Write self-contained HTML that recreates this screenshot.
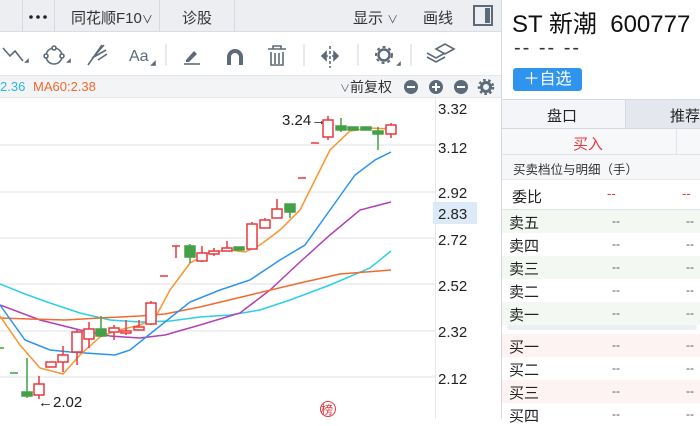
<!DOCTYPE html>
<html><head><meta charset="utf-8"><style>
*{margin:0;padding:0;box-sizing:border-box}
body{width:700px;height:419px;overflow:hidden;background:#fff;font-family:"Liberation Sans","Noto Sans CJK SC",sans-serif;position:relative;color:#222}
.a{position:absolute}
.top{left:0;top:0;width:502px;height:32px;background:#eceef2;border-bottom:1px solid #d9dde3}
.sep{position:absolute;top:0;width:1px;height:32px;background:#d6dae0}
.t{position:absolute;font-size:15px;top:7px;color:#333}
.tool{left:0;top:32px;width:502px;height:44px;background:#fff;border-bottom:1px solid #e3e6ea}
.ma{left:0;top:76px;width:502px;height:22px;background:#f3f4f6;border-bottom:1px solid #e6e8eb;font-size:13px}
.rp{left:501px;top:0;width:199px;height:419px;border-left:1px solid #d6dae0}
.row{position:absolute;left:502px;width:198px;height:23px;font-size:15px}
.row span{position:absolute;top:2px}
.d{color:#555;font-size:12px}
</style></head><body>
<div class="a top">
 <div class="sep" style="left:22px"></div><div class="sep" style="left:54px"></div><div class="sep" style="left:159px"></div><div class="sep" style="left:234px"></div>
 <svg class="a" style="left:28px;top:14px" width="20" height="6"><g fill="#222"><circle cx="3" cy="3" r="1.8"/><circle cx="10" cy="3" r="1.8"/><circle cx="17" cy="3" r="1.8"/></g></svg>
 <div class="t" style="left:71px">同花顺F10<span style="font-size:11px">∨</span></div>
 <div class="t" style="left:182px">诊股</div>
 <div class="t" style="left:353px">显示 <span style="font-size:11px;color:#556">∨</span></div>
 <div class="t" style="left:423px">画线</div>
 <div class="a" style="left:473px;top:5px;width:20px;height:21px;border:2px solid #5d6a7a"><div class="a" style="right:1px;top:1px;width:5px;height:15px;background:#5d6a7a"></div></div>
</div>
<div class="a tool">
 <svg width="502" height="44" style="position:absolute;left:0;top:0" fill="none" stroke="#5d6a7a" stroke-width="1.6">
  <path d="M3 16 L10 24 L15 19 L23 29"/><path d="M26 30 l2-2 v2z" fill="#5d6a7a"/>
  <circle cx="54" cy="24" r="8"/><circle cx="54" cy="16" r="2" fill="#fff"/><circle cx="46" cy="24" r="2" fill="#fff"/><circle cx="62" cy="24" r="2" fill="#fff"/><path d="M68 30 l2-2 v2z" fill="#5d6a7a"/>
  <path d="M88 33 L102 13 M92 26 L106 18 M96 22 L104 13 M98 28 L107 22"/>
  <text x="129" y="29" font-size="16" fill="#5d6a7a" stroke="none" font-family="Liberation Sans">Aa</text><path d="M152 33 l3-3 v3z" fill="#5d6a7a"/>
  <path d="M166 12 v22 M304 12 v22 M358 12 v22 M411 12 v22" stroke="#e3e6ea"/>
  <path d="M186 28 l8-9 l3 3 l-8 8 h-3z" fill="#5d6a7a" stroke="none"/><path d="M184 32 h16"/>
  <path d="M229 33 v-8 a6 6 0 0 1 12 0 v8" stroke-width="4"/>
  <path d="M268 17 h18 M273 17 v-3 h8 v3 M271 20 v13 h12 v-13 M275 21 v11 M279 21 v11"/>
  <path d="M330 14 v22" stroke-dasharray="3 2"/><path d="M322 24 l4-4 v8z M338 24 l-4-4 v8z" fill="#5d6a7a"/><path d="M326 24 h2 M332 24 h2"/>
  <circle cx="384" cy="23" r="5.5" stroke-width="2.5"/><circle cx="384" cy="23" r="8" stroke-width="2" stroke-dasharray="3 3"/><path d="M398 33 l2-2 v2z" fill="#5d6a7a"/>
  <path d="M436 17 l9-5 l9 5 l-9 5z M427 21 l9 5 l9-5 M427 25 l9 5 l9-5"/>
 </svg>
</div>
<div class="a ma"><span class="a" style="left:0;top:3px;color:#2bb7d9">2.36</span><span class="a" style="left:33px;top:3px;color:#f26a2f">MA60:2.38</span>
 <span class="a" style="left:340px;top:1px;color:#333;font-size:14px"><span style="font-size:10px;color:#556">∨</span>前复权</span>
 <svg class="a" style="left:402px;top:3px" width="96" height="16"><g fill="#5d6a7a"><circle cx="9" cy="8" r="7"/><circle cx="34" cy="8" r="7"/><circle cx="59" cy="8" r="7"/></g><g stroke="#fff" stroke-width="2"><path d="M5 8h8M30 8h8M34 4v8M55 8h8"/></g><circle cx="84" cy="8" r="4.5" fill="none" stroke="#5d6a7a" stroke-width="3"/><circle cx="84" cy="8" r="7" fill="none" stroke="#5d6a7a" stroke-width="2.5" stroke-dasharray="2.5 2.5"/></svg>
</div>
<svg class="a" style="left:0;top:98px" width="501" height="321">
<g stroke="#ececee" stroke-width="1.5"><path d="M0 47h435M0 94h435M0 140h435M0 186h435M0 233h435M0 279h435"/></g>
<path d="M435.5 0v321" stroke="#e6e8eb"/>
<rect x="433" y="104" width="44" height="22" fill="#dceaf8"/>
<g font-size="15" fill="#222" font-family="Liberation Sans"><text x="438" y="16">3.32</text><text x="438" y="55">3.12</text><text x="438" y="100">2.92</text><text x="438" y="121">2.83</text><text x="438" y="147">2.72</text><text x="438" y="193">2.52</text><text x="438" y="239">2.32</text><text x="438" y="286">2.12</text>
<text x="282" y="27">3.24→</text><text x="38" y="309">←2.02</text></g>
<g fill="none" stroke-width="1.5" transform="translate(0,-98)">
<polyline stroke="#2bd0e6" points="0,284 25,294 50,303 80,313 110,320 140,322 170,321 200,317 230,315 260,310 290,300 330,285 370,268 391,251"/>
<polyline stroke="#b43fb4" points="0,305 40,320 80,330 110,336 140,338 165,335 200,325 240,313 270,290 300,262 330,235 360,210 391,202"/>
<polyline stroke="#f26a2f" points="0,318 30,319 65,320 100,318 140,316 165,314 200,307 250,295 300,283 340,274 391,270"/>
<polyline stroke="#2b94f0" points="0,305 25,340 50,350 70,352 100,354 115,355 130,350 155,330 190,302 220,290 250,280 280,260 305,245 330,210 355,175 375,160 391,152"/>
<polyline stroke="#f99531" points="0,316 20,345 40,368 63,374 80,355 100,337 115,331 140,325 155,318 170,290 190,263 210,252 230,250 245,252 260,245 280,230 300,210 315,180 330,150 350,131 370,128 391,129"/>
<g stroke="#e8383f" stroke-width="1.5" fill="#fff">
<path d="M39 376v23M63 346v26M77 330v35M89 322v26M114 325v15M126 320v15M139 320v10M151 301v24M176 246v12M202 246v16M214 248v8M227 241v10M252 222v27M265 218v10M277 199v19M328 116v24M391 123v15"/>
<rect x="34" y="384" width="10" height="11"/><rect x="46" y="362" width="10" height="5"/><rect x="58" y="355" width="10" height="7"/><rect x="72" y="332" width="10" height="20"/><rect x="84" y="329" width="10" height="10"/><rect x="109" y="328" width="10" height="4"/><rect x="121" y="331" width="10" height="2"/><rect x="134" y="327" width="10" height="3"/><rect x="146" y="303" width="10" height="21"/><rect x="197" y="253" width="10" height="8"/><rect x="209" y="251" width="10" height="3"/><rect x="222" y="248" width="10" height="3"/><rect x="247" y="224" width="10" height="25"/><rect x="260" y="220" width="10" height="8"/><rect x="272" y="209" width="10" height="9"/><rect x="323" y="120" width="10" height="17"/><rect x="386" y="125" width="10" height="9"/>
<path d="M160 276h8M172 246h8M298 178h8M311 143h8" />
</g>
<g stroke="#44a046" stroke-width="1.5" fill="#44a046">
<path d="M-2 348h6M10 373h8M27 358v40M101 316v20M190 244v19M290 204v14M341 118v14M378 127v23"/>
<rect x="22" y="392" width="10" height="4"/><rect x="96" y="329" width="10" height="7"/><rect x="185" y="246" width="10" height="11"/><rect x="234" y="247" width="10" height="3"/><rect x="285" y="204" width="10" height="8"/><rect x="336" y="126" width="10" height="4"/><rect x="348" y="127" width="10" height="3"/><rect x="361" y="127" width="10" height="3"/><rect x="373" y="131" width="10" height="3"/>
</g></g>
<circle cx="328" cy="311" r="7.5" fill="none" stroke="#e8383f"/><text x="321" y="316" font-size="12" fill="#e8383f" font-family="Noto Sans CJK SC">榜</text>
</svg>
<div class="a rp">
 <div class="a" style="left:10px;top:4px;font-size:24px;color:#111">ST 新潮&nbsp;&nbsp;600777</div>
 <div class="a" style="left:12px;top:37px;font-size:20px;color:#333;letter-spacing:2px">-- -- --</div>
 <div class="a" style="left:11px;top:68px;width:69px;height:23px;background:#2e94ee;border-radius:3px;color:#fff;font-size:16px;text-align:center;line-height:23px">＋自选</div>
 <div class="a" style="left:0;top:99px;width:199px;height:30px;border-top:1px solid #d6dae0;border-bottom:1px solid #d6dae0;background:#f3f5f8">
  <div class="a" style="left:123px;top:0;width:76px;height:28px;background:#e4e8ee;border-left:1px solid #d6dae0"></div>
  <span class="a" style="left:45px;top:5px;font-size:15px">盘口</span><span class="a" style="left:168px;top:5px;font-size:15px">推荐</span>
 </div>
 <div class="a" style="left:0;top:129px;width:199px;height:26px;background:#f7f8fa;border-bottom:1px solid #e0e3e7"><div class="a" style="left:174px;top:0;width:1px;height:26px;background:#e0e3e7"></div><span class="a" style="left:71px;top:4px;font-size:15px;color:#e8383f">买入</span></div>
 <div class="a" style="left:0;top:155px;width:199px;height:25px;background:#f6f7f9;border-bottom:1px solid #e6e8eb"><span class="a" style="left:11px;top:4px;font-size:12.5px;color:#333">买卖档位与明细（手）</span></div>
 <div class="a" style="left:10px;top:186px;font-size:15px">委比</div>
 <div class="a" style="left:105px;top:186px;font-size:13px;color:#e8383f">--</div><div class="a" style="left:180px;top:186px;font-size:13px;color:#e8383f">--</div>
 <div class="a" style="left:0;top:209px;width:199px;height:1px;background:#e0e3e7"></div>
 <div class="a" style="left:5px;top:325px;width:190px;height:5px;border-radius:3px;background:#eceff3"></div>
</div>
<div class="row" style="top:210px;background:#f3f8f3"><span style="left:7px">卖五</span><span class="d" style="left:110px;top:4px">--</span><span class="d" style="left:184px;top:4px">--</span></div>
<div class="row" style="top:233px"><span style="left:7px">卖四</span><span class="d" style="left:110px;top:4px">--</span><span class="d" style="left:184px;top:4px">--</span></div>
<div class="row" style="top:256px;background:#f3f8f3"><span style="left:7px">卖三</span><span class="d" style="left:110px;top:4px">--</span><span class="d" style="left:184px;top:4px">--</span></div>
<div class="row" style="top:279px"><span style="left:7px">卖二</span><span class="d" style="left:110px;top:4px">--</span><span class="d" style="left:184px;top:4px">--</span></div>
<div class="row" style="top:302px;background:#f3f8f3"><span style="left:7px">卖一</span><span class="d" style="left:110px;top:4px">--</span><span class="d" style="left:184px;top:4px">--</span></div>
<div class="row" style="top:334px;background:#fdf3f2"><span style="left:7px">买一</span><span class="d" style="left:110px;top:4px">--</span><span class="d" style="left:184px;top:4px">--</span></div>
<div class="row" style="top:357px"><span style="left:7px">买二</span><span class="d" style="left:110px;top:4px">--</span><span class="d" style="left:184px;top:4px">--</span></div>
<div class="row" style="top:380px;background:#fdf3f2"><span style="left:7px">买三</span><span class="d" style="left:110px;top:4px">--</span><span class="d" style="left:184px;top:4px">--</span></div>
<div class="row" style="top:403px"><span style="left:7px">买四</span><span class="d" style="left:110px;top:4px">--</span><span class="d" style="left:184px;top:4px">--</span></div>
</body></html>
